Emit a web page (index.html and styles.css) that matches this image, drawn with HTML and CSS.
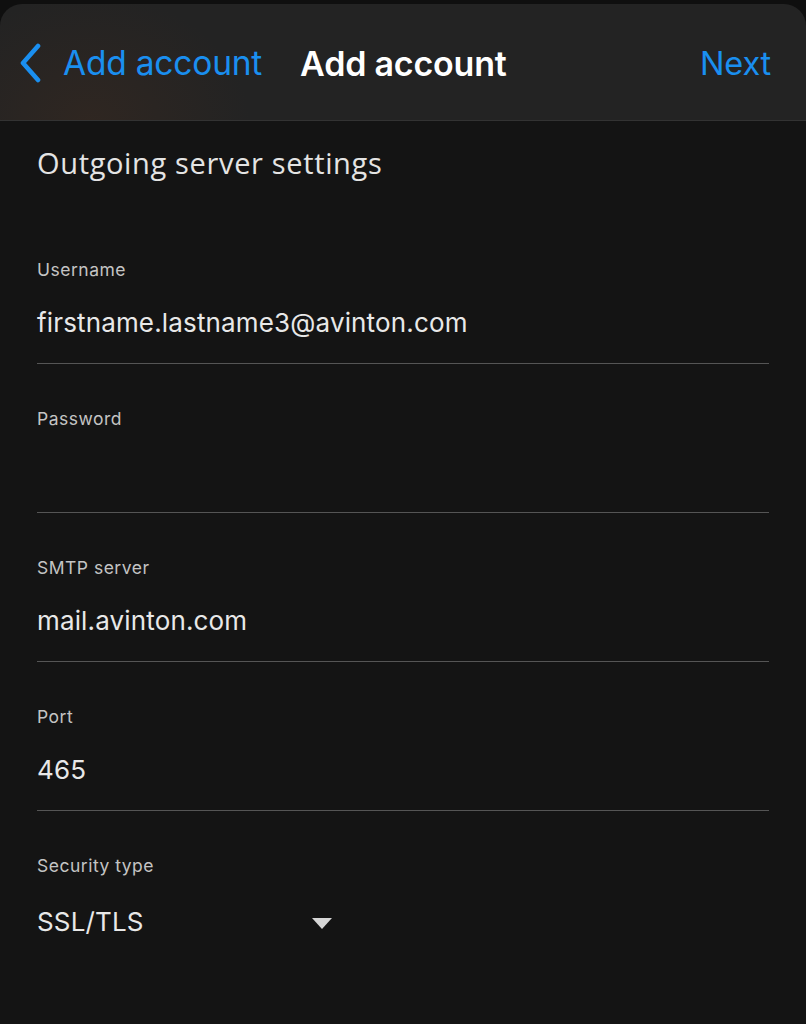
FILE: index.html
```html
<!DOCTYPE html>
<html lang="en">
<head>
<meta charset="utf-8">
<title>Add account</title>
<link rel="stylesheet" href="styles.css">
</head>
<body>
<div class="screen">
  <header class="navbar">
    <a class="nav-back">
      <svg class="chevron" width="24" height="40" viewBox="0 0 24 40" aria-hidden="true">
        <path d="M20 3 L5 20 L20 37" fill="none" stroke="#1a8ff0" stroke-width="4.6" stroke-linecap="round" stroke-linejoin="round"/>
      </svg>
      <span>Add account</span>
    </a>
    <h1 class="nav-title">Add account</h1>
    <a class="nav-next">Next</a>
  </header>

  <main class="form">
    <h2 class="section-title">Outgoing server settings</h2>

    <div class="field">
      <label class="field-label">Username</label>
      <div class="field-value">firstname.lastname3@avinton.com</div>
    </div>
    <div class="field">
      <label class="field-label">Password</label>
      <div class="field-value"></div>
    </div>
    <div class="field">
      <label class="field-label">SMTP server</label>
      <div class="field-value">mail.avinton.com</div>
    </div>
    <div class="field">
      <label class="field-label">Port</label>
      <div class="field-value">465</div>
    </div>
    <div class="field field-select">
      <label class="field-label">Security type</label>
      <div class="select">
        <span class="field-value">SSL/TLS</span>
        <span class="caret"></span>
      </div>
    </div>
  </main>
</div>
</body>
</html>
```

FILE: styles.css
```css
* { box-sizing: border-box; }

html, body {
  margin: 0;
  padding: 0;
  background: #141414;
}

body {
  font-family: Inter, Roboto, "Liberation Sans", sans-serif;
  color: #e6e6e6;
  width: 806px;
  height: 1024px;
  overflow: hidden;
}

.screen {
  background: #0f0f0f;
  padding-top: 4px;
}

/* top navigation bar with rounded upper corners */
.navbar {
  height: 117px;
  border-radius: 22px 22px 0 0;
  background:
    radial-gradient(ellipse 160px 130px at 90px 120px, rgba(70, 45, 30, 0.35), rgba(0, 0, 0, 0)),
    #232323;
  border-bottom: 1px solid #333333;
  display: flex;
  align-items: center;
  padding: 0 35px 0 18px;
}

.nav-back {
  display: flex;
  align-items: center;
  gap: 21px;
  color: #1a8ff0;
  font-size: 33.5px;
  letter-spacing: -0.2px;
  margin-top: 2px;
}

.chevron { display: block; }

.nav-title {
  margin: 2px 0 0 38px;
  font-size: 34px;
  font-weight: 600;
  color: #ffffff;
  letter-spacing: -0.2px;
}

.nav-next {
  margin-left: auto;
  color: #1a8ff0;
  font-size: 32.5px;
  letter-spacing: -0.2px;
  margin-top: 2px;
}

/* form body */
.form {
  background: #141414;
  padding: 0 37px;
  height: 903px;
}

.section-title {
  margin: 0;
  padding-top: 22px;
  height: 94px;
  font-family: "Open Sans", Roboto, sans-serif;
  font-weight: 400;
  font-size: 29px;
  line-height: 40px;
  color: #e4e4e4;
  letter-spacing: 0.65px;
}

.field {
  height: 149px;
  border-bottom: 1px solid #555555;
  padding-top: 44px;
}

.field-label {
  display: block;
  font-size: 17.5px;
  color: #c4c4c4;
  letter-spacing: 0.5px;
  line-height: 22px;
}

.field-value {
  display: block;
  font-size: 26px;
  line-height: 30px;
  color: #e8e8e8;
  height: 30px;
  margin-top: 27px;
  letter-spacing: 0.15px;
}

.field-select {
  border-bottom: none;
}

.select {
  display: flex;
  align-items: center;
  width: 295px;
  justify-content: space-between;
  margin-top: 30px;
}

.select .field-value {
  margin-top: 0;
}

.caret {
  width: 0;
  height: 0;
  margin-top: 2px;
  border-left: 10px solid transparent;
  border-right: 10px solid transparent;
  border-top: 11px solid #d6d6d6;
}
```
